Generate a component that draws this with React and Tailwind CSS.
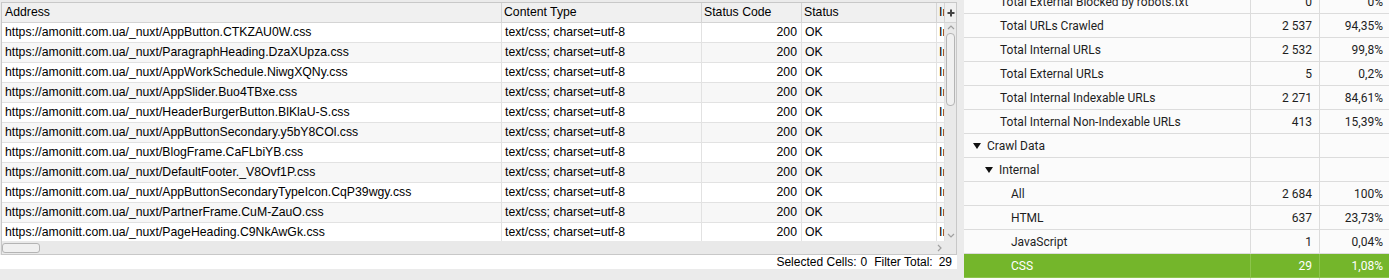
import React from "react";

const files = [
  "AppButton.CTKZAU0W.css",
  "ParagraphHeading.DzaXUpza.css",
  "AppWorkSchedule.NiwgXQNy.css",
  "AppSlider.Buo4TBxe.css",
  "HeaderBurgerButton.BlKlaU-S.css",
  "AppButtonSecondary.y5bY8COl.css",
  "BlogFrame.CaFLbiYB.css",
  "DefaultFooter._V8Ovf1P.css",
  "AppButtonSecondaryTypeIcon.CqP39wgy.css",
  "PartnerFrame.CuM-ZauO.css",
  "PageHeading.C9NkAwGk.css",
];

// summary rows on the right: [label, count, percent, indent, arrow, active]
const summary = [
  ["Total External Blocked by robots.txt", "0", "0%", "pl-[36px]"],
  ["Total URLs Crawled", "2 537", "94,35%", "pl-[36px]"],
  ["Total Internal URLs", "2 532", "99,8%", "pl-[36px]"],
  ["Total External URLs", "5", "0,2%", "pl-[36px]"],
  ["Total Internal Indexable URLs", "2 271", "84,61%", "pl-[36px]"],
  ["Total Internal Non-Indexable URLs", "413", "15,39%", "pl-[36px]"],
  ["Crawl Data", "", "", "pl-[9px]", true],
  ["Internal", "", "", "pl-[21px]", true],
  ["All", "2 684", "100%", "pl-[47px]"],
  ["HTML", "637", "23,73%", "pl-[47px]"],
  ["JavaScript", "1", "0,04%", "pl-[47px]"],
  ["CSS", "29", "1,08%", "pl-[47px]", false, true],
  ["", "", "", "pl-[47px]"],
];

const Chevron = ({ dir }) => {
  const pts = {
    up: "1,5 4,2 7,5",
    down: "1,2 4,5 7,2",
    right: "2,1 5,4 2,7",
  }[dir];
  return (
    <svg width="8" height="8" viewBox="0 0 8 8">
      <polyline points={pts} fill="none" stroke="#a0a0a0" strokeWidth="1.2" />
    </svg>
  );
};

const Triangle = () => (
  <svg width="8" height="6" viewBox="0 0 8 6" className="mr-[6px]">
    <polygon points="0,0 8,0 4,6" fill="#111" />
  </svg>
);

export default function App() {
  return (
    <div className="flex h-[280px] w-[1389px] overflow-hidden bg-[#ebebeb] font-['Liberation_Sans',Arial,sans-serif] text-[12px] text-black">
      {/* left grid */}
      <div className="flex w-[957px] shrink-0 flex-col pt-[2px]">
        <div className="ml-px flex h-[253px] w-[956px] border border-[#c8c8c8] bg-white text-[12.25px]">
          <div className="flex w-[943px] flex-col">
            <div className="h-[238px] overflow-hidden">
              <div className="flex h-[20px] items-center border-b border-[#d4d4d4] bg-[#f0f0f0]">
                <div className="w-[500px] border-r border-[#d4d4d4] pl-[3px] leading-[19px]">Address</div>
                <div className="w-[200px] border-r border-[#d4d4d4] pl-[2px] leading-[19px]">Content Type</div>
                <div className="w-[100px] border-r border-[#d4d4d4] pl-[2px] leading-[19px]">Status Code</div>
                <div className="w-[135px] border-r border-[#d4d4d4] pl-[2px] leading-[19px]">Status</div>
                <div className="w-[8px] overflow-hidden whitespace-nowrap border-r border-[#d4d4d4] pl-[2px] leading-[19px]">Indexability</div>
              </div>
              {files.map((f, i) => (
                <div
                  key={f}
                  className={`flex h-[20px] items-center border-b border-[#e2e2e2] ${i % 2 ? "bg-[#f7f7f7]" : "bg-white"}`}
                >
                  <div className="w-[500px] whitespace-nowrap border-r border-[#e2e2e2] pl-[3px] leading-[19px]">
                    https://amonitt.com.ua/_nuxt/{f}
                  </div>
                  <div className="w-[200px] border-r border-[#e2e2e2] pl-[3px] leading-[19px]">text/css; charset=utf-8</div>
                  <div className="w-[100px] border-r border-[#e2e2e2] pr-[4px] text-right leading-[19px]">200</div>
                  <div className="w-[135px] border-r border-[#e2e2e2] pl-[3px] leading-[19px]">OK</div>
                  <div className="w-[8px] overflow-hidden whitespace-nowrap border-r border-[#e2e2e2] pl-[2px] leading-[19px]">Indexable</div>
                </div>
              ))}
            </div>
            {/* horizontal scrollbar */}
            <div className="flex h-[13px] items-center justify-between bg-[#e9e9e9] pr-[1px]">
              <div className="h-[10px] w-[38px] rounded-[3px] border border-[#b4b4b4] bg-[#f0f0f0]" />
              <Chevron dir="right" />
            </div>
          </div>
          {/* vertical scrollbar */}
          <div className="flex w-[11px] flex-col bg-[#e9e9e9]">
            <div className="flex h-[20px] items-center justify-center border-b border-[#d4d4d4] bg-[#f0f0f0]">
              <svg width="8" height="8" viewBox="0 0 8 8">
                <path d="M4 0.5v7M0.5 4h7" stroke="#444" strokeWidth="2" />
              </svg>
            </div>
            <div className="flex justify-center pt-[1px]">
              <Chevron dir="up" />
            </div>
            <div className="mx-px mt-[1px] h-[73px] rounded-[4px] border border-[#b4b4b4] bg-[#f0f0f0]" />
            <div className="flex flex-1 items-end justify-center pb-[14px]">
              <Chevron dir="down" />
            </div>
          </div>
        </div>
        <div className="flex h-[14px] items-center justify-end bg-white pr-[5px] leading-[14px]">
          <span>Selected Cells:</span>
          <span className="ml-[4px]">0</span>
          <span className="ml-[7px]">Filter Total:</span>
          <span className="ml-[6px]">29</span>
        </div>
      </div>

      {/* gap between panels */}
      <div className="w-[7px] shrink-0" />

      {/* right summary */}
      <div className="w-[425px] shrink-0 overflow-hidden bg-white font-['Roboto',sans-serif] text-[12px] text-[#1e1e1e]">
        <div className="-mt-[10px]">
          {summary.map(([label, count, pct, indent, arrow, active], i) => (
            <div
              key={i}
              className={`flex h-[24px] border-b ${active ? "border-[#8cc44c] bg-[#74b62b] text-white" : "border-[#dcdcdc] bg-[#fbfbfb]"}`}
            >
              <div className={`flex w-[287px] items-center border-r ${active ? "border-[#8cc44c]" : "border-[#dcdcdc]"} ${indent}`}>
                {arrow && <Triangle />}
                {label}
              </div>
              <div className={`flex w-[69px] items-center justify-end border-r ${active ? "border-[#8cc44c]" : "border-[#dcdcdc]"} pr-[7px]`}>
                {count}
              </div>
              <div className="flex flex-1 items-center justify-end pr-[6px]">{pct}</div>
            </div>
          ))}
        </div>
      </div>
    </div>
  );
}
